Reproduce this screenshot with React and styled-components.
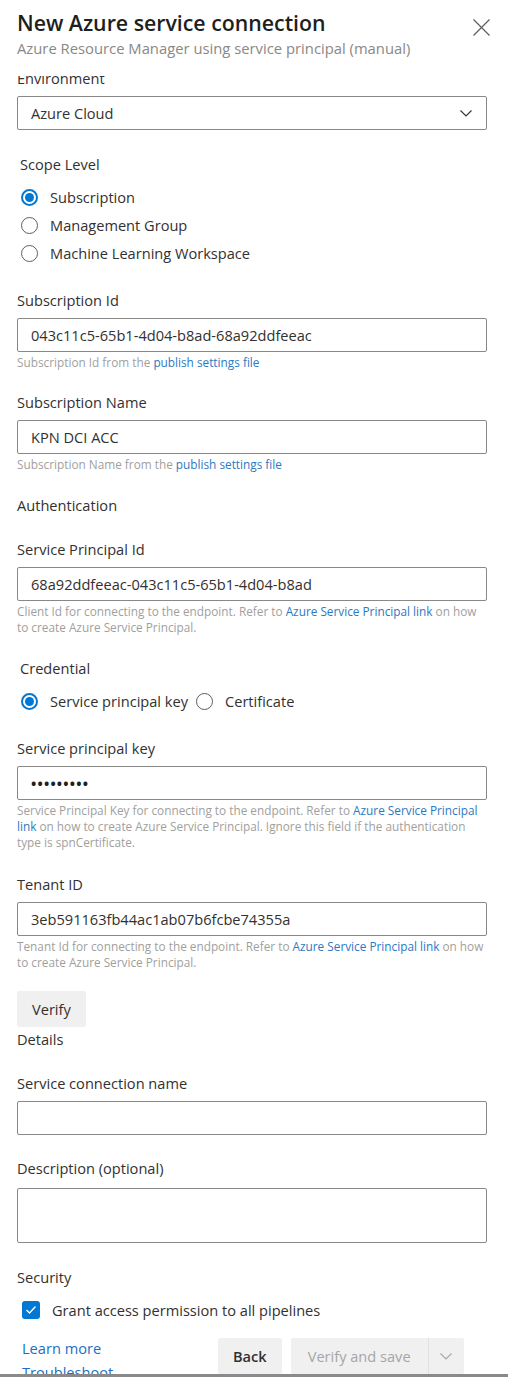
import React, { useLayoutEffect, useRef } from 'react';
import styled, { createGlobalStyle } from 'styled-components';

const GlobalStyle = createGlobalStyle`
  html, body {
    margin: 0;
    padding: 0;
    background: #fff;
  }
  body {
    font-family: "Segoe UI", "Open Sans", sans-serif;
    color: #323130;
  }
  * {
    box-sizing: border-box;
  }
`;

const Panel = styled.div`
  width: 508px;
  height: 1377px;
  display: flex;
  flex-direction: column;
  overflow: hidden;
  background: #fff;
  border-bottom: 3px solid #8a8a8a;
`;

const Header = styled.div`
  height: 76px;
  flex: none;
  display: flex;
  padding: 8px 15px 0 17px;
`;

const Titles = styled.div`
  flex: 1;
  min-width: 0;
`;

const Title = styled.div`
  font-size: 21.3px;
  line-height: 30px;
  font-weight: 600;
  color: #201f1e;
  white-space: nowrap;
`;

const Subtitle = styled.div`
  font-size: 14.8px;
  line-height: 20px;
  color: #8a8886;
  white-space: nowrap;
`;

const CloseButton = styled.div`
  width: 24px;
  height: 24px;
  margin-top: 7px;
  display: flex;
  align-items: center;
  justify-content: center;
`;

const Scroller = styled.div`
  flex: 1;
  overflow: hidden;
`;

const Content = styled.div`
  padding: 15px 21px 80px 17px;
`;

const Field = styled.div`
  margin-top: ${p => p.$mt ?? 0}px;
`;

const Label = styled.div`
  height: 20px;
  line-height: 20px;
  font-size: 14.6px;
  color: #323130;
  padding-left: ${p => (p.$indent ? 3 : 0)}px;
  white-space: nowrap;
`;

const Box = styled.div`
  margin-top: ${p => p.$mt ?? 8}px;
  height: ${p => p.$h ?? 34}px;
  border: 1px solid #8a8886;
  border-radius: 2px;
  padding: 0 14px 0 13px;
  display: flex;
  align-items: center;
  justify-content: space-between;
  font-size: 14.6px;
  color: #323130;
  white-space: nowrap;
`;

const Dots = styled.span`
  font-size: 14px;
  letter-spacing: 1.2px;
  font-weight: 700;
  color: #201f1e;
`;

const Helper = styled.div`
  margin-top: 2px;
  font-size: 11.8px;
  line-height: 16px;
  color: #a19f9d;
`;

const Link = styled.a`
  color: ${p => (p.$strong ? '#1a6fc4' : '#2b79c2')};
  text-decoration: none;
`;

const RadioList = styled.div`
  margin-top: 9px;
  padding-left: 4px;
  display: flex;
  flex-direction: ${p => (p.$row ? 'row' : 'column')};
`;

const RadioItem = styled.div`
  height: 28px;
  display: flex;
  align-items: center;
  gap: 12px;
  margin-right: 8px;
  font-size: 14.6px;
  color: #323130;
  white-space: nowrap;
`;

const RadioCircle = styled.span`
  width: 17px;
  height: 17px;
  flex: none;
  border-radius: 50%;
  border: ${p => (p.$checked ? '2px solid #0078d4' : '1px solid #605e5c')};
  display: flex;
  align-items: center;
  justify-content: center;
  &::after {
    content: '';
    width: 9px;
    height: 9px;
    border-radius: 50%;
    background: ${p => (p.$checked ? '#0078d4' : 'transparent')};
  }
`;

const Button = styled.div`
  height: 36px;
  padding: 0 ${p => p.$px ?? 16}px;
  display: inline-flex;
  align-items: center;
  justify-content: center;
  background: #f0f0f0;
  border-radius: 2px;
  font-size: 14.6px;
  font-weight: ${p => (p.$bold ? 600 : 400)};
  color: ${p => (p.$disabled ? '#a6a6a6' : '#323130')};
  white-space: nowrap;
`;

const VerifyRow = styled.div`
  margin-top: 21px;
`;

const CheckRow = styled.div`
  margin-top: 9px;
  height: 28px;
  padding-left: 5px;
  display: flex;
  align-items: center;
  gap: 12px;
  font-size: 14.6px;
  color: #323130;
  white-space: nowrap;
`;

const CheckBox = styled.span`
  width: 18px;
  height: 18px;
  border-radius: 3px;
  background: #0078d4;
  display: flex;
  align-items: center;
  justify-content: center;
`;

const Footer = styled.div`
  margin-top: 12px;
  display: flex;
  align-items: flex-start;
  padding-left: 5px;
`;

const FooterLinks = styled.div`
  width: 196px;
  display: flex;
  flex-direction: column;
  font-size: 14.6px;
  line-height: 24px;
`;

const FooterButtons = styled.div`
  margin-top: 2px;
  display: flex;
  gap: 9px;
`;

const SplitButton = styled.div`
  display: flex;
  background: #f0f0f0;
  border-radius: 2px;
`;

const SplitArrow = styled.div`
  width: 36px;
  height: 36px;
  border-left: 1px solid #e1e1e1;
  display: flex;
  align-items: center;
  justify-content: center;
`;

const Chevron = ({ color = '#323130' }) => (
  <svg width="12" height="7" viewBox="0 0 12 7">
    <path d="M0.5 0.5 L6 6 L11.5 0.5" fill="none" stroke={color} strokeWidth="1.1" />
  </svg>
);

const CloseIcon = () => (
  <svg width="17" height="17" viewBox="0 0 17 17">
    <path d="M0.5 0.5 L16.5 16.5 M16.5 0.5 L0.5 16.5" stroke="#605e5c" strokeWidth="1.2" />
  </svg>
);

const CheckIcon = () => (
  <svg width="12" height="10" viewBox="0 0 12 10">
    <path d="M1.5 5 L4.5 8 L10.5 1.5" fill="none" stroke="#fff" strokeWidth="1.4" />
  </svg>
);

function Radio({ checked, children }) {
  return (
    <RadioItem>
      <RadioCircle $checked={checked} />
      {children}
    </RadioItem>
  );
}

export default function App() {
  const scroller = useRef();

  // the panel body is scrolled a little, so the first label sits under the header
  useLayoutEffect(() => {
    scroller.current.scrollTop = 23;
  }, []);

  return (
    <>
      <GlobalStyle />
      <Panel>
        <Header>
          <Titles>
            <Title>New Azure service connection</Title>
            <Subtitle>Azure Resource Manager using service principal (manual)</Subtitle>
          </Titles>
          <CloseButton>
            <CloseIcon />
          </CloseButton>
        </Header>
        <Scroller ref={scroller}>
          <Content>
            <Field>
              <Label>Environment</Label>
              <Box>
                <span>Azure Cloud</span>
                <Chevron />
              </Box>
            </Field>

            <Field $mt={24}>
              <Label $indent>Scope Level</Label>
              <RadioList>
                <Radio checked>Subscription</Radio>
                <Radio>Management Group</Radio>
                <Radio>Machine Learning Workspace</Radio>
              </RadioList>
            </Field>

            <Field $mt={23}>
              <Label>Subscription Id</Label>
              <Box>043c11c5-65b1-4d04-b8ad-68a92ddfeeac</Box>
              <Helper>
                Subscription Id from the <Link>publish settings file</Link>
              </Helper>
            </Field>

            <Field $mt={22}>
              <Label>Subscription Name</Label>
              <Box>KPN DCI ACC</Box>
              <Helper>
                Subscription Name from the <Link>publish settings file</Link>
              </Helper>
            </Field>

            <Field $mt={23}>
              <Label>Authentication</Label>
            </Field>

            <Field $mt={24}>
              <Label>Service Principal Id</Label>
              <Box>68a92ddfeeac-043c11c5-65b1-4d04-b8ad</Box>
              <Helper>
                Client Id for connecting to the endpoint. Refer to{' '}
                <Link>Azure Service Principal link</Link> on how to create Azure Service Principal.
              </Helper>
            </Field>

            <Field $mt={23}>
              <Label $indent>Credential</Label>
              <RadioList $row>
                <Radio checked>Service principal key</Radio>
                <Radio>Certificate</Radio>
              </RadioList>
            </Field>

            <Field $mt={23}>
              <Label>Service principal key</Label>
              <Box>
                <Dots>•••••••••</Dots>
              </Box>
              <Helper>
                Service Principal Key for connecting to the endpoint. Refer to{' '}
                <Link>Azure Service Principal link</Link> on how to create Azure Service Principal.
                Ignore this field if the authentication type is spnCertificate.
              </Helper>
            </Field>

            <Field $mt={24}>
              <Label>Tenant ID</Label>
              <Box>3eb591163fb44ac1ab07b6fcbe74355a</Box>
              <Helper>
                Tenant Id for connecting to the endpoint. Refer to{' '}
                <Link>Azure Service Principal link</Link> on how to create Azure Service Principal.
              </Helper>
            </Field>

            <VerifyRow>
              <Button $px={15}>Verify</Button>
            </VerifyRow>

            <Field $mt={2}>
              <Label>Details</Label>
            </Field>

            <Field $mt={24}>
              <Label>Service connection name</Label>
              <Box />
            </Field>

            <Field $mt={23}>
              <Label>Description (optional)</Label>
              <Box $mt={10} $h={55} />
            </Field>

            <Field $mt={24}>
              <Label>Security</Label>
              <CheckRow>
                <CheckBox>
                  <CheckIcon />
                </CheckBox>
                Grant access permission to all pipelines
              </CheckRow>
            </Field>

            <Footer>
              <FooterLinks>
                <Link $strong>Learn more</Link>
                <Link $strong>Troubleshoot</Link>
              </FooterLinks>
              <FooterButtons>
                <Button $bold $px={15}>Back</Button>
                <SplitButton>
                  <Button $disabled $px={17}>Verify and save</Button>
                  <SplitArrow>
                    <Chevron color="#a6a6a6" />
                  </SplitArrow>
                </SplitButton>
              </FooterButtons>
            </Footer>
          </Content>
        </Scroller>
      </Panel>
    </>
  );
}
